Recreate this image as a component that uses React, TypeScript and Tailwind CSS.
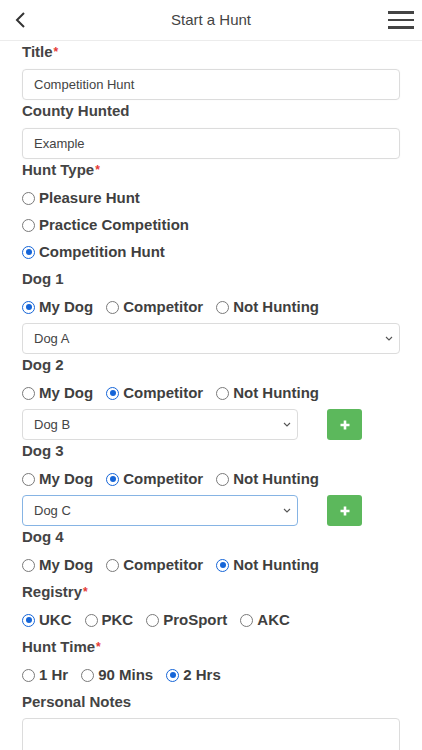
import React from "react";

const font = { fontFamily: '"Liberation Sans", Arial, sans-serif' };

function Label({ text, req }: { text: string; req?: boolean }) {
  return (
    <div className="h-[22px] mb-[6px] flex items-center text-[15px] font-bold text-[#444]">
      {text}
      {req && <span className="text-[#e53935] text-[12px] self-start mt-[2px] ml-[1px]">*</span>}
    </div>
  );
}

function Radio({ label, checked }: { label: string; checked?: boolean }) {
  return (
    <div className="flex items-center mr-[13px]">
      <span
        className={
          "w-[13px] h-[13px] rounded-full border-[1.5px] flex items-center justify-center bg-white " +
          (checked ? "border-[#1565d8]" : "border-[#7a7a7a]")
        }
      >
        {checked && <span className="w-[6px] h-[6px] rounded-full bg-[#1565d8]" />}
      </span>
      <span className="ml-[4px] text-[15px] font-bold text-[#3f3f3f]">{label}</span>
    </div>
  );
}

function RadioRow({ items, sel }: { items: string[]; sel: number }) {
  return (
    <div className="h-[22px] mb-[5px] flex items-center">
      {items.map((t, i) => (
        <Radio key={t} label={t} checked={i === sel} />
      ))}
    </div>
  );
}

function TextInput({ value }: { value: string }) {
  return (
    <div className="h-[31px] w-[378px] border border-[#dcdcdc] rounded-[4px] flex items-center pl-[11px] text-[13px] text-[#444] shadow-[0_0_2px_rgba(0,0,0,0.04)]">
      {value}
    </div>
  );
}

function Chevron() {
  return (
    <svg width="8" height="5" viewBox="0 0 8 5" fill="none">
      <path d="M1 1l3 3 3-3" stroke="#555" strokeWidth="1.1" />
    </svg>
  );
}

function Select({ value, full, focus }: { value: string; full?: boolean; focus?: boolean }) {
  return (
    <div className="flex items-center">
      <div
        className={
          "h-[31px] border rounded-[4px] flex items-center justify-between pl-[11px] pr-[6px] text-[13px] text-[#444] " +
          (full ? "w-[378px] " : "w-[276px] ") +
          (focus ? "border-[#86b4e4]" : "border-[#dcdcdc]")
        }
      >
        <span>{value}</span>
        <Chevron />
      </div>
      {!full && (
        <div className="ml-[29px] w-[35px] h-[31px] rounded-[3px] bg-[#5cb85c] flex items-center justify-center">
          <svg width="10" height="10" viewBox="0 0 10 10">
            <path d="M5 0.5v9M0.5 5h9" stroke="#fff" strokeWidth="2.6" />
          </svg>
        </div>
      )}
    </div>
  );
}

const dogOpts = ["My Dog", "Competitor", "Not Hunting"];

export default function App() {
  return (
    <div className="w-[422px] h-[750px] overflow-hidden bg-white" style={font}>
      <div className="h-[41px] border-b border-[#ececec] flex items-center justify-between px-[14px] relative">
        <svg width="14" height="18" viewBox="0 0 14 18" fill="none">
          <path d="M10 2L3 9l7 7" stroke="#333" strokeWidth="2" />
        </svg>
        <div className="absolute left-0 right-0 text-center text-[15px] text-[#444] pointer-events-none">
          Start a Hunt
        </div>
        <div className="flex flex-col gap-[4.5px] mr-[-6px]">
          <span className="block w-[26px] h-[2.8px] bg-[#444]" />
          <span className="block w-[26px] h-[2.8px] bg-[#444]" />
          <span className="block w-[26px] h-[2.8px] bg-[#444]" />
        </div>
      </div>

      <div className="pl-[22px]">
        <Label text="Title" req />
        <TextInput value="Competition Hunt" />
        <Label text="County Hunted" />
        <TextInput value="Example" />

        <Label text="Hunt Type" req />
        <RadioRow items={["Pleasure Hunt"]} sel={-1} />
        <RadioRow items={["Practice Competition"]} sel={-1} />
        <RadioRow items={["Competition Hunt"]} sel={0} />

        <Label text="Dog 1" />
        <RadioRow items={dogOpts} sel={0} />
        <Select value="Dog A" full />

        <Label text="Dog 2" />
        <RadioRow items={dogOpts} sel={1} />
        <Select value="Dog B" />

        <Label text="Dog 3" />
        <RadioRow items={dogOpts} sel={1} />
        <Select value="Dog C" focus />

        <Label text="Dog 4" />
        <RadioRow items={dogOpts} sel={2} />

        <Label text="Registry" req />
        <RadioRow items={["UKC", "PKC", "ProSport", "AKC"]} sel={0} />

        <Label text="Hunt Time" req />
        <RadioRow items={["1 Hr", "90 Mins", "2 Hrs"]} sel={2} />

        <Label text="Personal Notes" />
        <div className="w-[378px] h-[80px] border border-[#dcdcdc] rounded-[4px] mt-[-1px]" />
      </div>
    </div>
  );
}
